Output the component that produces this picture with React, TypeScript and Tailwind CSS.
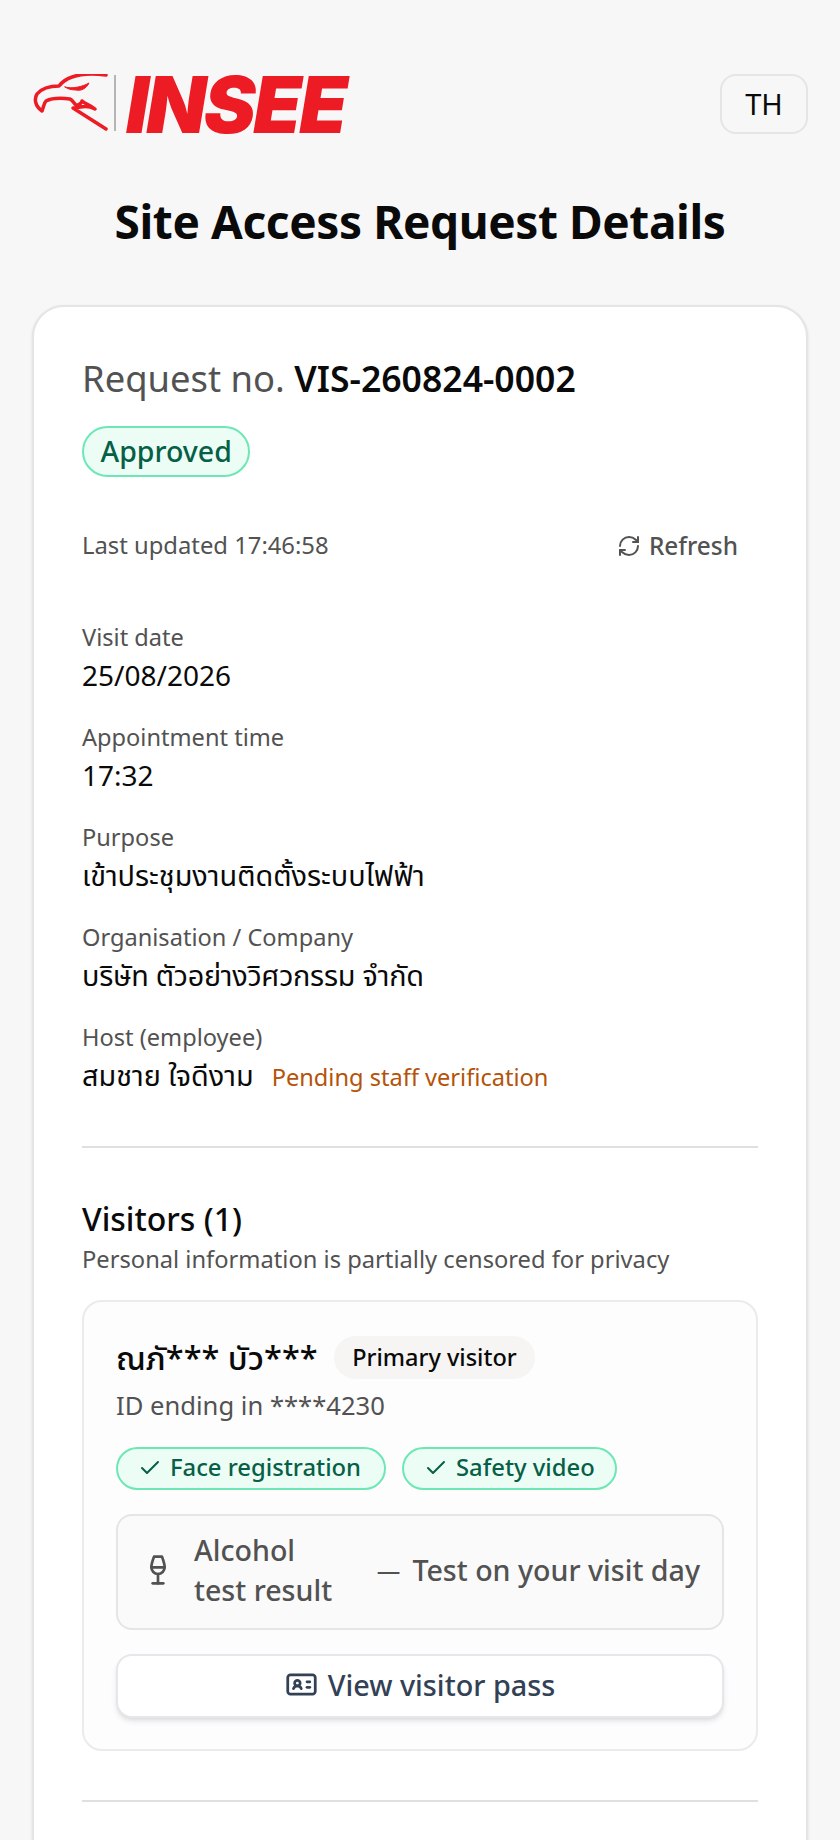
import { Check, IdCard, RefreshCw, Wine } from "lucide-react";

function Logo() {
  return (
    <div className="flex items-start">
      <svg width="82" height="60" viewBox="0 6 82 60" fill="none" stroke="#ed1c24" strokeLinecap="round" strokeLinejoin="round">
        <path d="M74 7 C60 5 48 6 40 9 C34 11 30 14 27 18 C20 18 10 20 5 26 C2 31 3 38 10 43 C12 38 12 35 14 33 C20 30 30 30 38 31 C41 32 42 36 44 37 C47 37 49 36 50 33 C53 36 58 37 63 41 C58 38 53 38 48 39 C45 40 43 40 41 40 L74 61" strokeWidth="3.5" />
        <path d="M33 19 C40 21 50 19 57 15 C54 21 49 23 44 22 C39 22 36 21 33 19 Z" fill="#ed1c24" strokeWidth="1" />
      </svg>
      <div className="mt-[1px] mr-[10px] h-[56px] w-[2px] bg-[#b5b5b5]" />
      <span className="mt-[1px] font-['Inter'] text-[78px] leading-[60px] font-black tracking-[-2.5px] text-[#ed1c24] italic">INSEE</span>
    </div>
  );
}

function Field({ label, value, extra, thai, tight }: { label: string; value: string; extra?: string; thai?: boolean; tight?: boolean }) {
  return (
    <div className="h-[100px]">
      <div className="text-[23.6px] leading-[36px] text-[#525252]">{label}</div>
      <div className={thai ? "flex items-baseline gap-[18px] text-[28.8px] leading-[40px]" : "text-[28px] leading-[40px]"}>
        <span className={tight ? "tracking-[-0.25px]" : ""}>{value}</span>
        {extra && <span className="text-[23.6px] text-[#b45309]">{extra}</span>}
      </div>
    </div>
  );
}

function DonePill({ label, wide }: { label: string; wide?: boolean }) {
  return (
    <span className={wide ? "flex h-[43px] items-center gap-2 rounded-full border-2 border-[#6ee7b7] bg-[#ecfdf5] pl-[20px] pr-[23px] text-[23.8px] font-medium text-[#065f46]" : "flex h-[43px] items-center gap-2 rounded-full border-2 border-[#6ee7b7] bg-[#ecfdf5] px-[20px] text-[23.8px] font-medium text-[#065f46]"}>
      <Check size={24} strokeWidth={2} />
      {label}
    </span>
  );
}

export default function App() {
  return (
    <div className="h-[1840px] overflow-hidden bg-[#f7f7f8] px-8 pt-[74px] font-['Noto_Sans','Noto_Sans_Thai',sans-serif] text-[#0a0a0a]">
      <header className="flex items-start justify-between">
        <Logo />
        <button type="button" className="h-[60px] w-[88px] rounded-2xl border-2 border-[#e5e5e5] text-[29px]">TH</button>
      </header>

      <h1 className="mt-[53px] text-center text-[46px] leading-[66px] font-bold tracking-[-0.4px]">Site Access Request Details</h1>

      <main className="mt-[51px] h-[1600px] rounded-[32px] border-2 border-[#e5e5e5] bg-white px-[48px] pt-[47px] shadow-sm">
        <div className="text-[36.4px] leading-[48px] text-[#525252]">
          Request no. <span className="text-[35.6px] font-semibold text-[#0a0a0a]">VIS-260824-0002</span>
        </div>
        <span className="mt-[24px] inline-flex h-[51px] items-center rounded-full border-2 border-[#6ee7b7] bg-[#ecfdf5] px-[16.5px] text-[28.5px] font-medium text-[#065f46]">Approved</span>

        <div className="mt-[51px] flex items-center justify-between pr-[20px] text-[23.8px] text-[#525252]">
          <span>Last updated 17:46:58</span>
          <span className="flex items-center gap-2 text-[24.4px] font-medium">
            <RefreshCw size={24} strokeWidth={2} />
            Refresh
          </span>
        </div>

        <div className="mt-[54px]">
          <Field label="Visit date" value="25/08/2026" />
          <Field label="Appointment time" value="17:32" />
          <Field label="Purpose" value="เข้าประชุมงานติดตั้งระบบไฟฟ้า" thai />
          <Field label="Organisation / Company" value="บริษัท ตัวอย่างวิศวกรรม จำกัด" thai tight />
          <Field label="Host (employee)" value="สมชาย ใจดีงาม" extra="Pending staff verification" thai />
        </div>

        <hr className="mt-[27px] border-t-2 border-[#e0e0e0]" />

        <h2 className="mt-[48px] text-[32px] leading-[45px] font-medium">Visitors (1)</h2>
        <p className="text-[23.7px] leading-[36px] text-[#525252]">Personal information is partially censored for privacy</p>

        <section className="mt-[23px] h-[451px] rounded-[20px] border-2 border-[#ebebeb] bg-[#fdfdfd] px-[32px] pt-[34px]">
          <div className="flex items-center gap-4">
            <span className="text-[32.6px] leading-[44px] font-medium">ณภั*** บัว***</span>
            <span className="flex h-[43px] items-center rounded-full bg-[#f7f5f3] px-[18.5px] text-[23.5px] font-medium">Primary visitor</span>
          </div>
          <div className="mt-[8px] text-[25.6px] leading-[36px] text-[#525252]">ID ending in ****4230</div>
          <div className="mt-[23px] flex gap-4">
            <DonePill label="Face registration" wide />
            <DonePill label="Safety video" />
          </div>
          <div className="mt-[24px] flex h-[116px] items-center rounded-2xl border-2 border-[#e5e5e5] bg-[#fafafa] pb-[3px] pl-[24px] pr-[22px] text-[28.6px] font-medium leading-[40px] text-[#525252]">
            <Wine size={32} strokeWidth={2} className="shrink-0" />
            <div className="ml-[20px] w-[145px]">Alcohol test result</div>
            <div className="ml-auto flex items-center gap-3">
              <span className="text-[23.6px]">—</span>
              <span>Test on your visit day</span>
            </div>
          </div>
          <button type="button" className="mt-[24px] flex h-[64px] w-full items-center justify-center gap-[10px] rounded-2xl border-2 border-[#e5e7eb] bg-white pb-[2px] text-[28.8px] font-medium text-[#334155] shadow-md">
            <IdCard size={33} strokeWidth={2} />
            View visitor pass
          </button>
        </section>

        <hr className="mt-[49px] border-t-2 border-[#e0e0e0]" />
      </main>
    </div>
  );
}
